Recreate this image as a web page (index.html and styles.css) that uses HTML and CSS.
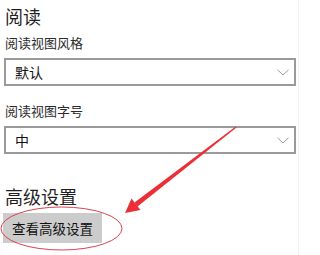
FILE: index.html
```html
<!DOCTYPE html>
<html lang="zh-CN">
<head>
<meta charset="utf-8">
<title>阅读</title>
<link rel="stylesheet" href="styles.css">
</head>
<body>
<div class="page">
  <h2 class="section-title first">阅读</h2>
  <div class="field">
    <div class="field-label">阅读视图风格</div>
    <div class="select">
      <span class="select-value">默认</span>
      <svg class="chevron" width="12" height="7" viewBox="0 0 12 7"><path d="M0.5 0.8 L6 6 L11.5 0.8" fill="none" stroke="#9c9c9c" stroke-width="1"/></svg>
    </div>
  </div>
  <div class="field">
    <div class="field-label">阅读视图字号</div>
    <div class="select">
      <span class="select-value">中</span>
      <svg class="chevron" width="12" height="7" viewBox="0 0 12 7"><path d="M0.5 0.8 L6 6 L11.5 0.8" fill="none" stroke="#9c9c9c" stroke-width="1"/></svg>
    </div>
  </div>
  <h2 class="section-title second">高级设置</h2>
  <button class="btn">查看高级设置</button>
  <div class="divider"></div>
  <svg class="annotation" width="303" height="255" viewBox="0 0 303 255">
    <ellipse cx="61.5" cy="228.5" rx="60.5" ry="21.5" fill="none" stroke="#d9434f" stroke-width="1"/>
    <polygon points="236.5,127.4 235.7,126.6 134.5,202.5 137.5,206.5" fill="#ea2f38"/>
    <polygon points="125,213 131.5,198.5 140.5,210" fill="#ea2f38"/>
  </svg>
</div>
</body>
</html>
```

FILE: styles.css
```css
html, body {
  margin: 0;
  padding: 0;
  background: #ffffff;
}
.page {
  position: relative;
  width: 303px;
  height: 255px;
  overflow: hidden;
  box-sizing: border-box;
  padding: 4px 7px 0 4px;
  font-family: "Noto Sans CJK SC", "Noto Sans", sans-serif;
  color: #1a1a1a;
}
.section-title {
  margin: 0;
  padding-left: 1px;
  font-size: 18px;
  line-height: 24px;
  font-weight: normal;
  color: #1f1f1f;
}
.section-title.second {
  margin-top: 30px;
}
.field {
  margin-top: 5px;
}
.field + .field {
  margin-top: 15px;
}
.field-label {
  padding-left: 1px;
  font-size: 13px;
  line-height: 19px;
  color: #2b2b2b;
  margin-bottom: 6px;
}
.select {
  height: 28px;
  box-sizing: border-box;
  border: 2px solid #9a9a9a;
  display: flex;
  align-items: center;
  justify-content: space-between;
  padding: 0 5px 0 9px;
  background: #fff;
}
.select-value {
  font-size: 14px;
  color: #111;
}
.chevron {
  display: block;
}
.btn {
  display: block;
  margin: 5px 0 0 -1px;
  width: 99px;
  height: 30px;
  border: none;
  background: #cccccc;
  font-family: "Noto Sans CJK SC", "Noto Sans", sans-serif;
  font-size: 13.5px;
  color: #111;
  padding: 0;
}
.divider {
  position: absolute;
  top: 0;
  right: 4px;
  width: 1px;
  height: 255px;
  background: #f2f2f2;
}
.annotation {
  position: absolute;
  top: 0;
  left: 0;
  pointer-events: none;
}
```
